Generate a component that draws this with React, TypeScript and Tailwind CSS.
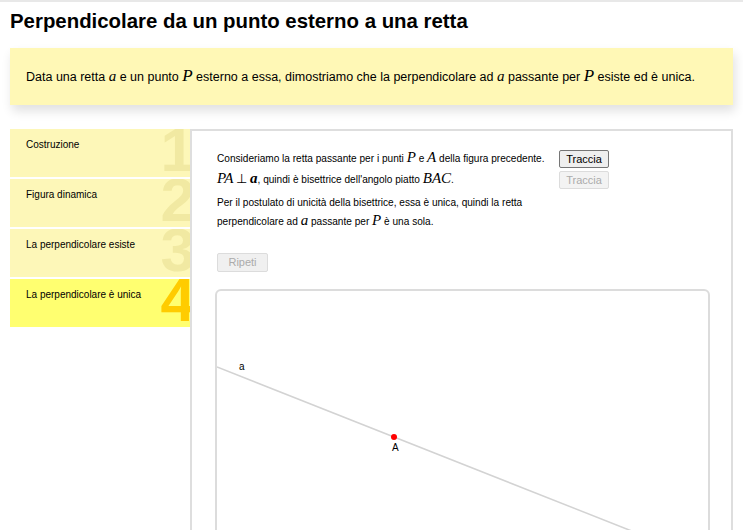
import React from 'react';

const steps = [
  { label: 'Costruzione', n: '1' },
  { label: 'Figura dinamica', n: '2' },
  { label: 'La perpendicolare esiste', n: '3' },
  { label: 'La perpendicolare è unica', n: '4' },
];

const M: React.FC<{ children: React.ReactNode; size?: string; bold?: boolean }> = ({ children, size = 'text-[15px]', bold }) => (
  <span className={`font-['Liberation_Serif',serif] italic leading-none ${size} ${bold ? 'font-bold' : ''}`}>{children}</span>
);

const App: React.FC = () => {
  const current = 4;
  return (
    <div className="min-h-[530px] overflow-hidden bg-white border-t-2 border-[#e8e8e8] font-['Liberation_Sans',Arial,sans-serif] text-black">
      <h1 className="px-[10px] pt-[6px] text-[20.4px] leading-[26px] font-bold">
        Perpendicolare da un punto esterno a una retta
      </h1>

      <div className="mx-[10px] mt-[14px] h-[57px] flex items-center px-[16px] bg-[#fff8b6] shadow-[2px_6px_10px_rgba(0,0,0,0.12)] text-[12.5px] leading-[18px]">
        <p>
          Data una retta <M>a</M> e un punto <M size="text-[17px]">P</M> esterno a essa, dimostriamo che la perpendicolare ad{' '}
          <M>a</M> passante per <M size="text-[17px]">P</M> esiste ed è unica.
        </p>
      </div>

      <div className="flex mx-[10px] mt-[24px]">
        <nav className="w-[180px] shrink-0 flex flex-col gap-[2px]">
          {steps.map((s, i) => {
            const active = i + 1 === current;
            return (
              <div
                key={s.label}
                className={`relative h-[48px] overflow-hidden pl-[16px] pt-[8px] text-[10px] ${active ? 'bg-[#ffff70]' : 'bg-[#fdf7b8]'}`}
              >
                <span
                  aria-hidden="true"
                  className={`absolute right-[-5px] top-[-10px] text-[62px] leading-none font-bold ${active ? 'text-[#ffcc00]' : 'text-[#f1e9a2]'}`}
                >
                  {s.n}
                </span>
                <span className="relative">{s.label}</span>
              </div>
            );
          })}
        </nav>

        <section className="flex-1 min-h-[420px] border-2 border-b-0 border-[#dedede] pl-[25px] pr-[20px] pt-[19px] text-[10.1px]">
          <div className="grid grid-cols-[342px_50px] gap-y-[3px] items-center leading-[18px]">
            <p className="h-[18px]">
              Consideriamo la retta passante per i punti <M>P</M> e <M>A</M> della figura precedente.
            </p>
            <button className="h-[18px] rounded-[2px] border border-[#767676] bg-[#efefef] text-[11px] leading-none">Traccia</button>
            <p className="h-[18px]">
              <M>PA</M> <span className="text-[13px] leading-none">⊥</span> <M bold>a</M>, quindi è bisettrice dell'angolo piatto <M>BAC</M>.
            </p>
            <button disabled className="h-[18px] rounded-[2px] border border-[#dcdcdc] bg-[#f3f3f3] text-[11px] leading-none text-[#ababab]">
              Traccia
            </button>
          </div>
          <p className="mt-[4px] w-[320px] leading-[19px]">
            Per il postulato di unicità della bisettrice, essa è unica, quindi la retta perpendicolare ad <M>a</M> passante per{' '}
            <M>P</M> è una sola.
          </p>

          <button disabled className="mt-[22px] h-[19px] w-[51px] rounded-[2px] border border-[#dcdcdc] bg-[#f0f0f0] text-[11px] leading-none text-[#ababab]">
            Ripeti
          </button>

          <div className="mt-[17px] h-[300px] w-[495px] -ml-[2px] rounded-[6px] border-2 border-[#dcdcdc] overflow-hidden">
            <svg width="491" height="296" viewBox="0 0 491 296">
              <line x1="0" y1="76" x2="440" y2="250" stroke="#d3d3d3" strokeWidth="1.5" />
              <text x="22" y="79" fontSize="10" fontFamily="Liberation Sans, Arial, sans-serif" fill="#000">a</text>
              <circle cx="177" cy="146" r="3" fill="#ff0000" />
              <text x="175" y="160" fontSize="10" fontFamily="Liberation Sans, Arial, sans-serif" fill="#000">A</text>
            </svg>
          </div>
        </section>
      </div>
    </div>
  );
};

export default App;
